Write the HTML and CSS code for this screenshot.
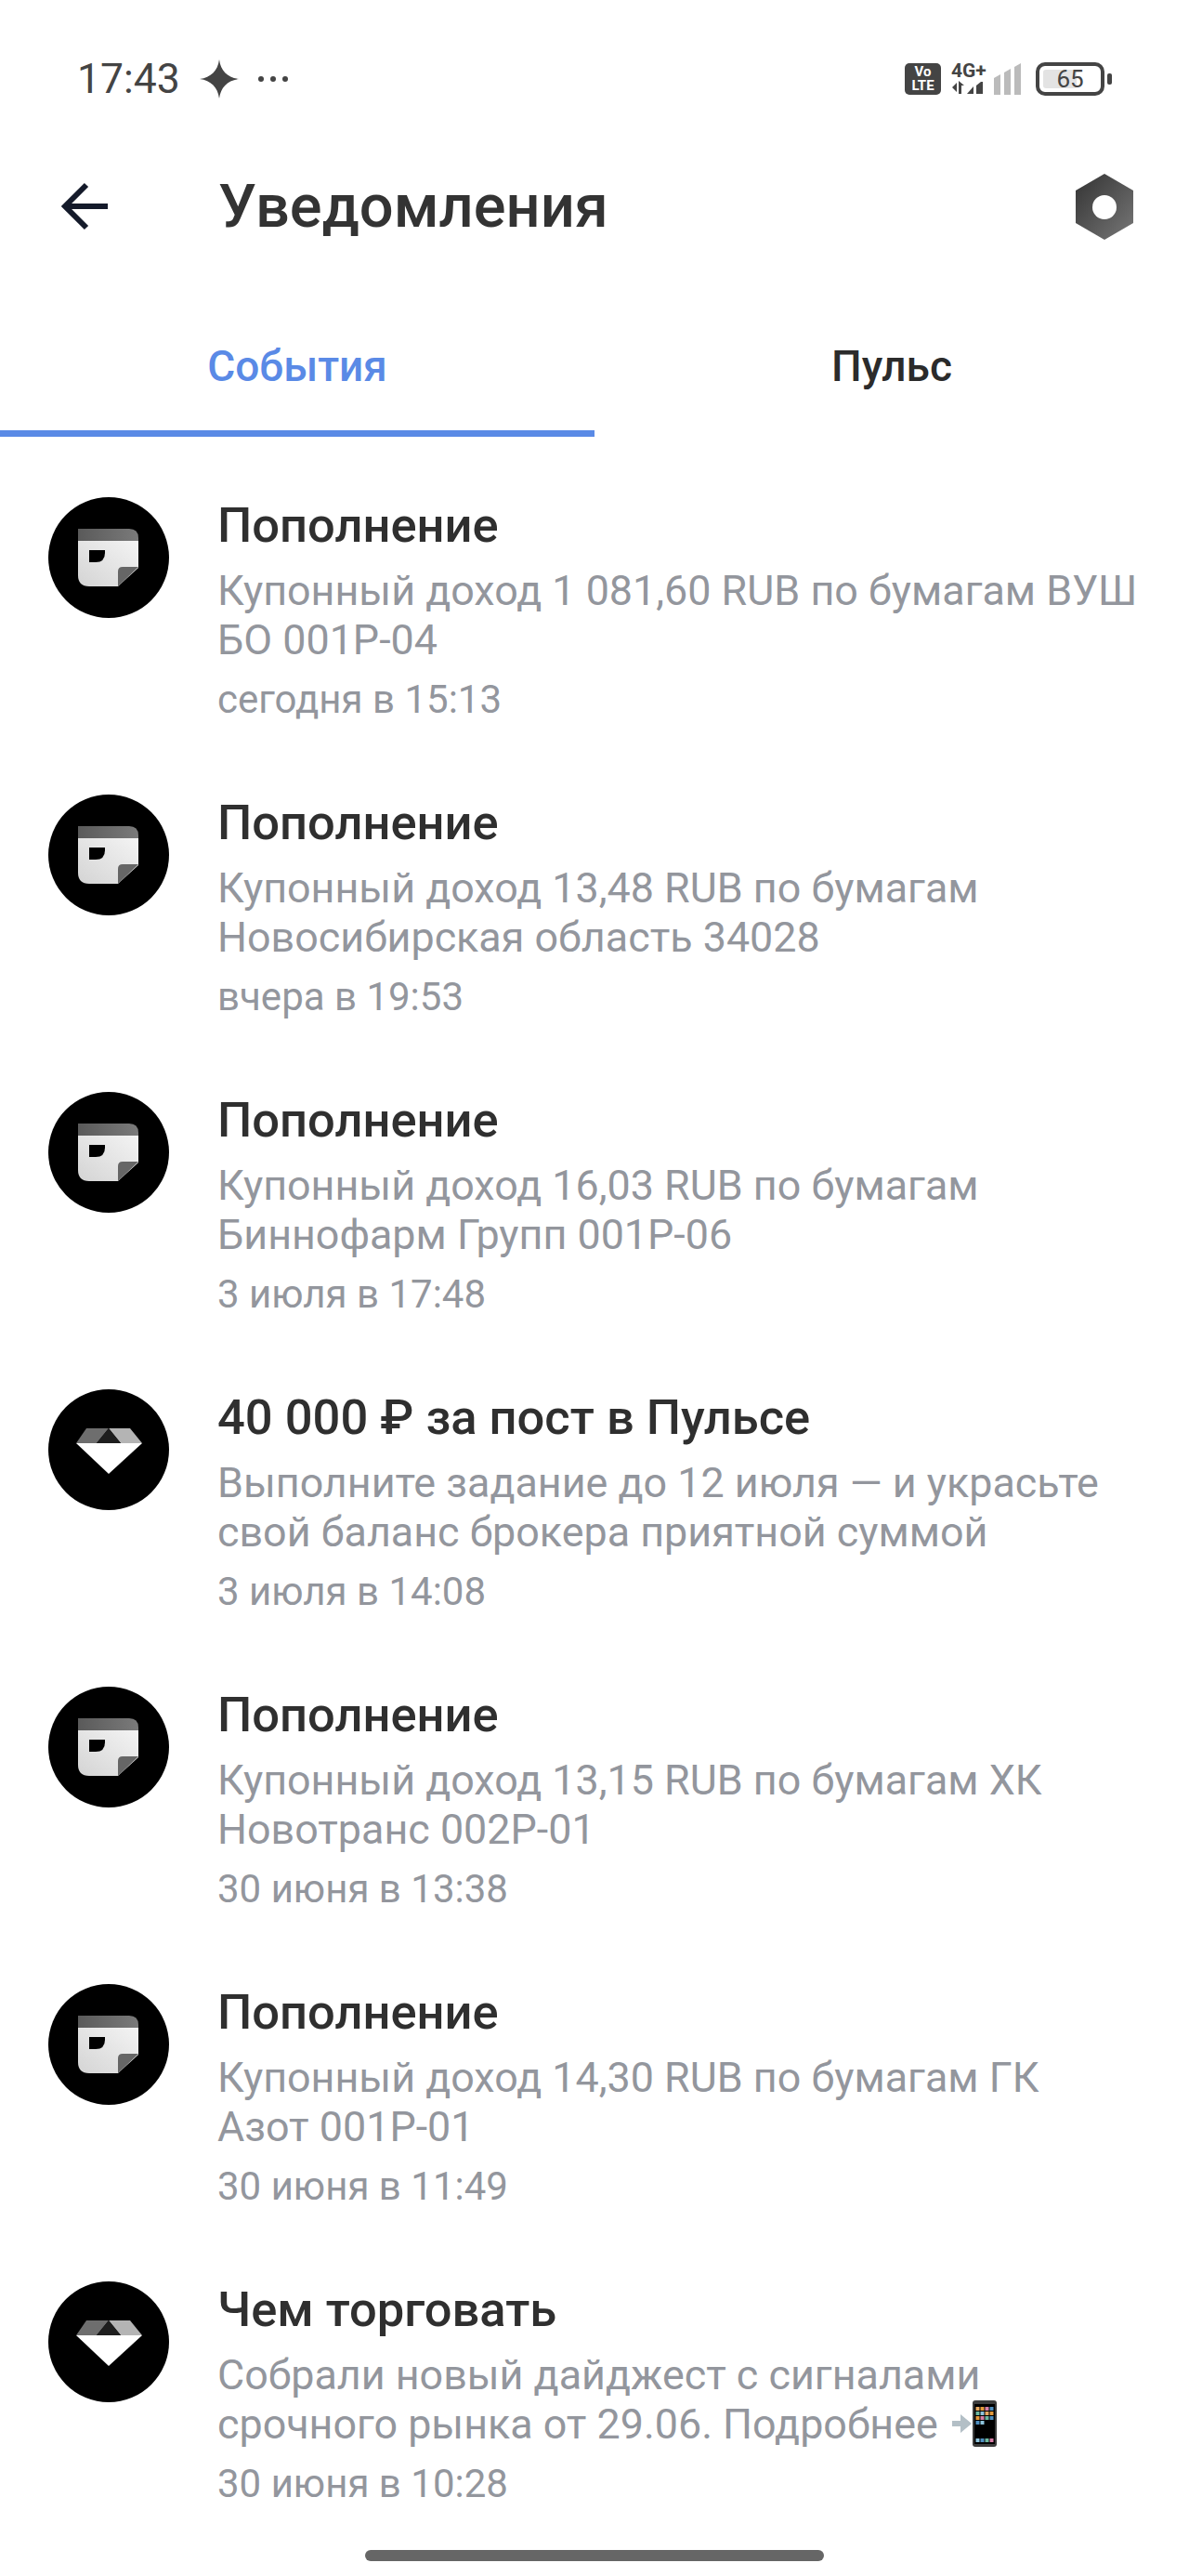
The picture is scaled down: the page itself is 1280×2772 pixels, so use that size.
FILE: index.html
```html
<!DOCTYPE html>
<html lang="ru">
<head>
<meta charset="utf-8">
<title>Уведомления</title>
<link rel="stylesheet" href="styles.css">
</head>
<body>
<svg class="defs" width="0" height="0" aria-hidden="true">
  <defs>
    <linearGradient id="sheet" x1="0" y1="1" x2="1" y2="0"><stop offset="0" stop-color="#d4d4d4"/><stop offset="1" stop-color="#f4f4f4"/></linearGradient>
    <linearGradient id="band" x1="0" y1="0" x2="1" y2="0"><stop offset="0" stop-color="#5a5a5a"/><stop offset="1" stop-color="#7a7a7a"/></linearGradient>
    <linearGradient id="nut" x1="0" y1="0" x2="1" y2="1"><stop offset="0" stop-color="#333"/><stop offset="1" stop-color="#777"/></linearGradient>
    <symbol id="note" viewBox="0 0 130 130">
      <circle cx="65" cy="65" r="65" fill="#000"/>
      <path d="M32 46H97V76L75 96H44Q32 96 32 84Z" fill="url(#sheet)"/>
      <path d="M32 34H87Q97 34 97 44V47H32Z" fill="url(#band)"/>
      <path d="M75 96V80Q75 75 80 75H97Z" fill="#666"/>
      <path d="M44 57H61V60Q61 70 51 70H44Z" fill="#000"/>
    </symbol>
    <symbol id="gem" viewBox="0 0 130 130">
      <circle cx="65" cy="65" r="65" fill="#000"/>
      <path d="M30 58H101L65 91Z" fill="#fff"/>
      <path d="M41 42H65L52 58H30Z" fill="#6e6e6e"/>
      <path d="M65 42H88L101 58H78Z" fill="#b4b4b4"/>
      <path d="M65 42L78 58H52Z" fill="#1e1e1e"/>
    </symbol>
  </defs>
</svg>
<main class="screen">
  <div class="status">
    <div class="status-left">
      <span class="clock">17:43</span>
      <svg class="spark" viewBox="0 0 42 42"><path d="M21 0C22.500 12 30 19.500 42 21C30 22.500 22.500 30 21 42C19.500 30 12 22.500 0 21C12 19.500 19.500 12 21 0Z" fill="#444"/></svg>
      <svg class="dots" viewBox="0 0 34 8"><circle cx="4" cy="4" r="3" fill="#444"/><circle cx="17" cy="4" r="3" fill="#444"/><circle cx="30" cy="4" r="3" fill="#444"/></svg>
    </div>
    <div class="status-right">
      <span class="volte">Vo<br>LTE</span>
      <div class="net">
        <span class="net-label">4G+</span>
        <svg class="net-arrows" viewBox="0 0 41 16"><path d="M6 3V13L1 8Z M8 1L8 15H11V6L14 6Z M17 15L24 7V15Z M27 15V6L32 2H34V15Z" fill="#444"/></svg>
      </div>
      <svg class="bars" viewBox="0 0 30 34"><path d="M0 16L7 12V34H0Z M11 10L18 6V34H11Z M22 4L29 0V34H22Z" fill="#bbb"/></svg>
      <div class="battery">
        <div class="cell"><span class="level"></span><span class="pct">65</span></div>
        <span class="nub"></span>
      </div>
    </div>
  </div>

  <header class="bar">
    <svg class="back" viewBox="0 0 52 52"><path d="M50 26H4M27 3L4 26L27 49" fill="none" stroke="#141a2a" stroke-width="6"/></svg>
    <h1 class="title">Уведомления</h1>
    <svg class="gear" viewBox="0 0 62 71"><path d="M31 0L62 18V53L31 71L0 53V18Z" fill="url(#nut)"/><circle cx="31" cy="36" r="13" fill="#fff"/></svg>
  </header>

  <nav class="tabs">
    <a class="tab tab-on">События</a>
    <a class="tab">Пульс</a>
  </nav>

  <ul class="list">
    <li class="item">
      <svg class="ava"><use href="#note"/></svg>
      <div class="copy">
        <h2 class="head">Пополнение</h2>
        <p class="body">Купонный доход 1 081,60 RUB по бумагам ВУШ БО 001P-04</p>
        <time class="when">сегодня в 15:13</time>
      </div>
    </li>
    <li class="item">
      <svg class="ava"><use href="#note"/></svg>
      <div class="copy">
        <h2 class="head">Пополнение</h2>
        <p class="body">Купонный доход 13,48 RUB по бумагам<br>Новосибирская область 34028</p>
        <time class="when">вчера в 19:53</time>
      </div>
    </li>
    <li class="item">
      <svg class="ava"><use href="#note"/></svg>
      <div class="copy">
        <h2 class="head">Пополнение</h2>
        <p class="body">Купонный доход 16,03 RUB по бумагам<br>Биннофарм Групп 001P-06</p>
        <time class="when">3 июля в 17:48</time>
      </div>
    </li>
    <li class="item">
      <svg class="ava"><use href="#gem"/></svg>
      <div class="copy">
        <h2 class="head">40 000 ₽ за пост в Пульсе</h2>
        <p class="body">Выполните задание до 12 июля — и украсьте свой баланс брокера приятной суммой</p>
        <time class="when">3 июля в 14:08</time>
      </div>
    </li>
    <li class="item">
      <svg class="ava"><use href="#note"/></svg>
      <div class="copy">
        <h2 class="head">Пополнение</h2>
        <p class="body">Купонный доход 13,15 RUB по бумагам ХК<br>Новотранс 002P-01</p>
        <time class="when">30 июня в 13:38</time>
      </div>
    </li>
    <li class="item">
      <svg class="ava"><use href="#note"/></svg>
      <div class="copy">
        <h2 class="head">Пополнение</h2>
        <p class="body">Купонный доход 14,30 RUB по бумагам ГК<br>Азот 001P-01</p>
        <time class="when">30 июня в 11:49</time>
      </div>
    </li>
    <li class="item item-last">
      <svg class="ava"><use href="#gem"/></svg>
      <div class="copy">
        <h2 class="head">Чем торговать</h2>
        <p class="body">Собрали новый дайджест с сигналами<br>срочного рынка от 29.06. Подробнее <svg class="emoji" viewBox="0 0 48 50"><path d="M0 22H9V15L21 25L9 35V28H0Z" fill="#b3bfc6"/><rect x="22" y="0" width="26" height="50" rx="3" fill="#3d3d3d"/><rect x="24" y="4" width="22" height="43" fill="#000"/><g fill="#e6a860"><rect x="25.500" y="7" width="4" height="4"/><rect x="35.500" y="12" width="4" height="4"/><rect x="30.500" y="7" width="4" height="4" fill="#e39a3c"/></g><g fill="#d77fa8"><rect x="35.500" y="7" width="4" height="4"/><rect x="30.500" y="17" width="4" height="4"/></g><g fill="#4f8fc0"><rect x="40.500" y="7" width="4" height="4"/><rect x="40.500" y="17" width="4" height="4"/><rect x="25.500" y="22" width="4" height="4"/></g><g fill="#6cb8a0"><rect x="25.500" y="12" width="4" height="4"/><rect x="35.500" y="17" width="4" height="4"/><rect x="35.500" y="41" width="4" height="4"/></g><g fill="#8fc4dc"><rect x="30.500" y="12" width="4" height="4"/><rect x="30.500" y="22" width="4" height="4"/><rect x="25.500" y="41" width="4" height="4"/></g><rect x="40.500" y="12" width="4" height="4" fill="#e39a3c"/><rect x="25.500" y="17" width="4" height="4" fill="#e39a3c"/><rect x="30.500" y="41" width="4" height="4" fill="#4f8fc0"/><rect x="40.500" y="41" width="4" height="4" fill="#d77fa8"/></svg></p>
        <time class="when">30 июня в 10:28</time>
      </div>
    </li>
  </ul>
  <div class="home"><span class="home-pill"></span></div>
</main>
</body>
</html>
```

FILE: styles.css
```css
* { box-sizing: border-box; }
html, body { margin: 0; padding: 0; background: #fff; }
body { font-family: Roboto, "Noto Sans", sans-serif; color: #2b2b2b; }
.defs { display: block; height: 0; }
.screen { width: 1280px; height: 2772px; overflow: hidden; display: flex; flex-direction: column; }

.status { height: 170px; display: flex; align-items: center; justify-content: space-between; padding: 0 83px 0 83px; }
.status-left { display: flex; align-items: center; }
.clock { font-size: 44.5px; line-height: 50px; color: #444; }
.spark { width: 42px; height: 42px; margin-left: 21px; }
.dots { width: 34px; height: 8px; margin-left: 20px; }
.status-right { display: flex; align-items: center; height: 34px; }
.volte { width: 39px; height: 34px; background: #444; color: #fff; border-radius: 5px; font-size: 15px; line-height: 15px; font-weight: 700; text-align: center; padding-top: 2px; }
.net { margin-left: 11px; width: 41px; height: 34px; display: flex; flex-direction: column; justify-content: space-between; }
.net-label { font-size: 21px; line-height: 16px; font-weight: 700; color: #444; }
.net-arrows { width: 41px; height: 16px; display: block; }
.bars { width: 30px; height: 34px; margin-left: 5px; }
.battery { display: flex; align-items: center; margin-left: 15px; }
.cell { position: relative; width: 74px; height: 36px; border: 4px solid #444; border-radius: 10px; display: flex; align-items: center; justify-content: center; }
.level { position: absolute; left: 4px; top: 4px; bottom: 4px; width: 36px; background: #e3e3e3; border-radius: 3px; }
.pct { position: relative; font-size: 26px; line-height: 28px; color: #444; }
.nub { width: 5px; height: 12px; background: #444; border-radius: 2px; margin-left: 3px; }

.bar { height: 104px; display: flex; align-items: center; padding: 0 60px 0 66px; }
.back { width: 52px; height: 52px; flex: none; }
.title { margin: 0 0 0 117px; flex: 1; font-size: 65px; line-height: 70px; font-weight: 500; color: #333; }
.gear { width: 62px; height: 71px; flex: none; }

.tabs { display: flex; height: 196px; }
.tab { flex: 1; padding-top: 90px; font-size: 46px; line-height: 60px; font-weight: 500; text-align: center; color: #2b2b2b; border-bottom: 7px solid transparent; }
.tab-on { color: #5a8ae6; border-bottom-color: #5a8ae6; }

.list { list-style: none; margin: 0; padding: 65px 30px 0 52px; }
.item { display: flex; height: 320px; }
.item-last { height: 289px; }
.ava { width: 130px; height: 130px; flex: none; }
.copy { margin-left: 52px; flex: 1; }
.head { margin: 0; font-size: 52.5px; line-height: 60px; font-weight: 500; color: #2f2f2f; }
.body { margin: 14px 0 0; font-size: 44.85px; line-height: 53px; color: #93969d; }
.when { display: block; margin-top: 13px; font-size: 42px; line-height: 50px; color: #93969d; }
.emoji { width: 48px; height: 50px; vertical-align: -9px; margin-left: 4px; }

.home { display: flex; justify-content: center; padding-top: 0; }
.home-pill { width: 494px; height: 12px; border-radius: 6px; background: #666; }
```
